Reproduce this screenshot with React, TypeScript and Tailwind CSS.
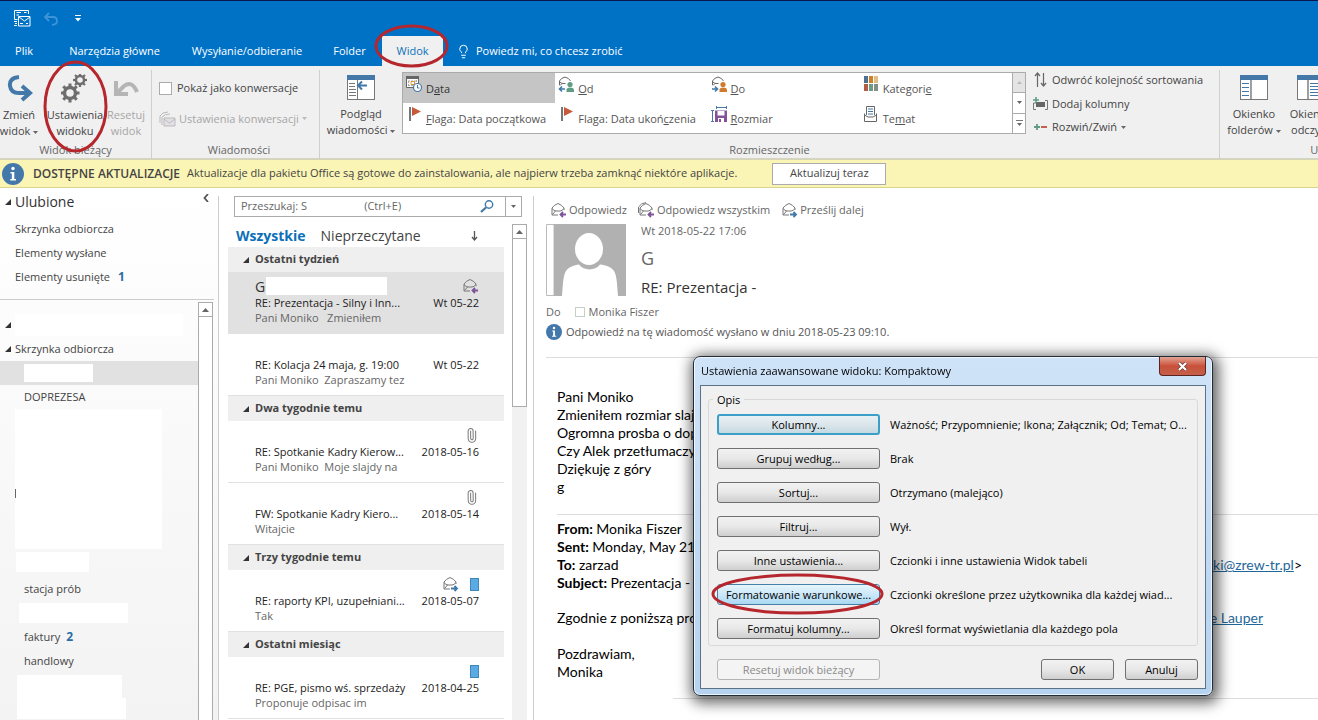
import React from "react";
import { Lightbulb, Paperclip } from "lucide-react";

type MailIcon = "reply" | "forward" | "clip";

type Mail = {
  sender?: string;
  subject: string;
  preview: string;
  date: string;
  icon?: MailIcon;
  category?: boolean;
  selected?: boolean;
};

const mailGroups: { title: string; mails: Mail[] }[] = [
  {
    title: "Ostatni tydzień",
    mails: [
      {
        sender: "G",
        subject: "RE: Prezentacja - Silny i Inn...",
        preview: "Pani Moniko   Zmieniłem",
        date: "Wt 05-22",
        icon: "reply",
        selected: true,
      },
      {
        subject: "RE: Kolacja 24 maja, g. 19:00",
        preview: "Pani Moniko  Zapraszamy tez",
        date: "Wt 05-22",
      },
    ],
  },
  {
    title: "Dwa tygodnie temu",
    mails: [
      {
        subject: "RE: Spotkanie Kadry Kierow...",
        preview: "Pani Moniko  Moje slajdy na",
        date: "2018-05-16",
        icon: "clip",
      },
      {
        subject: "FW: Spotkanie Kadry Kiero...",
        preview: "Witajcie",
        date: "2018-05-14",
        icon: "clip",
      },
    ],
  },
  {
    title: "Trzy tygodnie temu",
    mails: [
      {
        subject: "RE: raporty KPI, uzupełniani...",
        preview: "Tak",
        date: "2018-05-07",
        icon: "forward",
        category: true,
      },
    ],
  },
  {
    title: "Ostatni miesiąc",
    mails: [
      {
        subject: "RE: PGE, pismo wś. sprzedaży",
        preview: "Proponuje odpisac im",
        date: "2018-04-25",
        category: true,
      },
    ],
  },
];

const viewOptions = [
  { label: "Kolumny...", text: "Ważność; Przypomnienie; Ikona; Załącznik; Od; Temat; O..." },
  { label: "Grupuj według...", text: "Brak" },
  { label: "Sortuj...", text: "Otrzymano (malejąco)" },
  { label: "Filtruj...", text: "Wył." },
  { label: "Inne ustawienia...", text: "Czcionki i inne ustawienia Widok tabeli" },
  {
    label: "Formatowanie warunkowe...",
    text: "Czcionki określone przez użytkownika dla każdej wiad...",
  },
  { label: "Formatuj kolumny...", text: "Określ format wyświetlania dla każdego pola" },
];

const dialogButton =
  "h-[21px] rounded-[3px] border border-[#707070] bg-linear-to-b from-[#f2f2f2] from-0% via-[#e8e8e8] via-50% to-[#cfcfcf] text-center leading-[19px] whitespace-nowrap";
const dialogButtonFocus =
  "h-[21px] rounded-[3px] border-2 border-[#3c9fc8] bg-linear-to-b from-[#e8f1f5] via-[#dce6ea] to-[#c5d9e2] text-center leading-[17px] whitespace-nowrap";
const dialogButtonHover =
  "h-[21px] rounded-[3px] border border-[#4a7fa5] bg-linear-to-b from-[#e6f5fd] via-[#cbe8f9] to-[#a9d9f2] text-center leading-[19px] whitespace-nowrap";
const bigButton = "flex shrink-0 flex-col items-center whitespace-nowrap text-center leading-4";
const groupLabel = "mt-auto pb-px text-center text-[#666] leading-[14px]";

const Caret = ({ className = "text-[#666]" }: { className?: string }) => (
  <svg className={`inline-block shrink-0 ${className}`} width="5" height="3" viewBox="0 0 5 3">
    <path d="M0 0H5L2.5 3Z" fill="currentColor" />
  </svg>
);

const Corner = () => (
  <svg className="shrink-0" width="6" height="6" viewBox="0 0 6 6">
    <path d="M6 0V6H0Z" fill="#333" />
  </svg>
);

const Ring = ({ className }: { className: string }) => (
  <svg
    className={`pointer-events-none absolute z-10 overflow-visible ${className}`}
    viewBox="0 0 100 100"
    preserveAspectRatio="none"
  >
    <ellipse
      cx="50"
      cy="50"
      rx="50"
      ry="50"
      fill="none"
      stroke="#b5262d"
      strokeWidth="3"
      vectorEffect="non-scaling-stroke"
    />
  </svg>
);

const Envelope = ({ kind, all = false }: { kind: "reply" | "forward"; all?: boolean }) => (
  <svg className="shrink-0" width="17" height="16" viewBox="0 0 17 16" fill="none">
    {all && <path d="M.5 11V5Q3 1 8 .6" stroke="#777" />}
    <path d="M2 6Q4 3 8 1.500Q12 3 14 6V8M2 6V13H8" stroke="#777" strokeLinejoin="round" />
    <path d="M2 6.500Q4 9 6 9H10Q12 9 14 6.500M2.500 12.500L5.500 9" stroke="#777" />
    {kind === "reply" ? (
      <path d="M16 12.500H10.500M13 10L10.500 12.500L13 15" stroke="#7d5596" strokeWidth="1.8" />
    ) : (
      <path d="M9 12.500H15M12.500 10L15 12.500L12.500 15" stroke="#3f79a8" strokeWidth="1.8" />
    )}
  </svg>
);

const Info = ({ size }: { size: number }) => (
  <svg className="shrink-0" width={size} height={size} viewBox="0 0 22 22">
    <circle cx="11" cy="11" r="11" fill="#4478ab" />
    <circle cx="11" cy="5.5" r="1.7" fill="#fff" />
    <path d="M8.5 9H12.3V16H14V17.5H8.3V16H9.8V10.4H8.5Z" fill="#fff" />
  </svg>
);

const gearTeeth = [0, 45, 90, 135, 180, 225, 270, 315];

const Gear = ({ x, y, r }: { x: number; y: number; r: number }) => (
  <g transform={`translate(${x} ${y})`}>
    <circle r={r * 0.58} fill="none" stroke="#6e6e6e" strokeWidth={r * 0.36} />
    {gearTeeth.map((angle) => (
      <rect
        key={angle}
        x={-r * 0.16}
        y={-r}
        width={r * 0.32}
        height={r * 0.34}
        fill="#6e6e6e"
        transform={`rotate(${angle})`}
      />
    ))}
  </g>
);

const PaneIcon = ({ kind }: { kind: "preview" | "folders" | "reading" }) => (
  <svg width="28" height="26" viewBox="0 0 28 26" fill="none">
    <rect x=".5" y=".5" width="27" height="24" fill="#fff" stroke="#777" />
    <rect width="28" height="5" fill="#4378a9" />
    {kind === "preview" && (
      <>
        <path d="M2 8.5H8M2 11.5H8M2 14.5H9M2 17.5H9M2 20.5H9" stroke="#777" />
        <path d="M10.5 5V25" stroke="#777" />
        <path d="M20 10.5H11M15 6.5L11 10.5L15 14.5" stroke="#4378a9" strokeWidth="2" />
      </>
    )}
    {kind === "folders" && (
      <>
        <path d="M2 8.5H9M2 12.5H9M2 16.5H9M2 20.5H9" stroke="#4378a9" />
        <path d="M11 5V25" stroke="#777" strokeWidth="1.4" />
      </>
    )}
    {kind === "reading" && (
      <>
        <path d="M11 5V25" stroke="#777" strokeWidth="1.4" />
        <path d="M13 8.5H26M13 11.5H26M13 14.5H26M13 17.5H26M13 20.5H26" stroke="#4378a9" />
      </>
    )}
  </svg>
);

const DateIcon = () => (
  <svg className="shrink-0" width="17" height="17" viewBox="0 0 17 17" fill="none">
    <path d="M.5 .5H12.5V11.5H.5Z" fill="#fff" stroke="#666" />
    <path d="M0 0H13V3H0Z" fill="#666" />
    <path d="M2 5H11M2 9.500H8M2.500 5V10M10.500 4V7" stroke="#aaa" strokeDasharray="2 1" />
    <path d="M5 5.500H8.500V8.500H5Z" stroke="#d9953b" />
    <circle cx="11.5" cy="11.5" r="4" fill="#fff" stroke="#4378a9" strokeWidth="1.2" />
    <path d="M11.5 9V12H13.5" stroke="#4378a9" />
  </svg>
);

const PersonIcon = ({ to }: { to?: boolean }) => (
  <svg className="shrink-0" width="17" height="17" viewBox="0 0 17 17" fill="none">
    <path d="M1.500 9V5Q3 2 7 1Q11 2 12.500 5M1.500 5.500Q3 7.500 5 7.500H7.500M2 9.500L4 7.500" stroke="#666" />
    <circle cx="12" cy="8.500" r="2.600" fill={to ? "#d07a2d" : "#5f9c86"} />
    <path
      d="M8.500 16V13.500Q9 11.500 12 11.500Q15.500 11.500 16 13.500V16Z"
      fill={to ? "#d07a2d" : "#5f9c86"}
    />
    {to ? (
      <path d="M1 13H6M4 10.500L6.500 13L4 15.500" stroke="#3f79a8" strokeWidth="1.6" />
    ) : (
      <path d="M7 13H2M4 10.500L1.500 13L4 15.500" stroke="#3f79a8" strokeWidth="1.6" />
    )}
  </svg>
);

const FlagIcon = () => (
  <svg className="shrink-0" width="17" height="17" viewBox="0 0 17 17">
    <path d="M3 1H5V15H3Z" fill="#777" />
    <path d="M6 1L15 5.5L6 10Z" fill="#c65a3a" />
  </svg>
);

const SizeIcon = () => (
  <svg className="shrink-0" width="17" height="17" viewBox="0 0 17 17" fill="none">
    <path d="M5 1.500H16M5.500 0V3M15.500 0V3M1.500 4V16M0 4.500H3M0 15.500H3" stroke="#4378a9" />
    <path d="M4 4.500H16V16H4Z" fill="#83529b" />
    <path d="M6.500 5H13.500V9.500H6.500ZM7 12H13V16H7Z" fill="#fff" />
    <path d="M8 13H10V16H8Z" fill="#83529b" />
  </svg>
);

const CategoryIcon = () => (
  <svg className="shrink-0" width="17" height="17" viewBox="0 0 17 17">
    <path d="M1 0H5V7H1Z" fill="#4d7291" />
    <path d="M6 0H10V7H6Z" fill="#d37f2a" />
    <path d="M11 0H15V7H11Z" fill="#dfbf83" />
    <path d="M1 8H5V15H1Z" fill="#b55c45" />
    <path d="M6 8H10V15H6Z" fill="#6b9c8a" />
    <path d="M11 8H15V15H11Z" fill="#858f88" />
  </svg>
);

const SubjectIcon = () => (
  <svg className="shrink-0" width="17" height="17" viewBox="0 0 17 17" fill="none">
    <path d="M3.500 9V.5H11.500V9" fill="#fff" stroke="#666" />
    <path d="M5 3H10M5 5.500H10M5 8H10" stroke="#4378a9" />
    <path d="M1.500 7.500V15.500H13.500V7.500M1.500 9L5 11H10L13.500 9" stroke="#666" />
  </svg>
);

const galleryRows = [
  [
    { icon: <DateIcon />, before: "D", key: "a", after: "ta", active: true },
    { icon: <PersonIcon />, before: "", key: "O", after: "d" },
    { icon: <PersonIcon to />, before: "", key: "D", after: "o" },
    { icon: <CategoryIcon />, before: "Kategori", key: "e", after: "" },
  ],
  [
    { icon: <FlagIcon />, before: "", key: "F", after: "laga: Data początkowa" },
    { icon: <FlagIcon />, before: "Flaga: Data ukoń", key: "c", after: "zenia" },
    { icon: <SizeIcon />, before: "", key: "R", after: "ozmiar" },
    { icon: <SubjectIcon />, before: "Te", key: "m", after: "at" },
  ],
];

const TitleBar = () => (
  <header className="border-t border-[#0a1650] bg-[#0072c6] text-white">
    <div className="flex h-[35px] items-center gap-[13px] pl-[14px]">
      <button aria-label="Wyślij/odbierz">
        <svg width="17" height="17" viewBox="0 0 17 17" fill="none" stroke="#fff">
          <path d="M3.500 9.500H.5V.5H14.500V4M2.500 2.500H7M2.500 5H5M10 2.500H12.500M0 11.500H3M1 13.500H3M0 15.500H3" />
          <path d="M4.500 6.500H16V16H4.500ZM5 7L10.500 11L16 7M6 13.500H9M12 13.500H14" />
        </svg>
      </button>
      <button aria-label="Cofnij" className="text-[#3d93d6]">
        <svg width="14" height="14" viewBox="0 0 14 14" fill="none" stroke="currentColor" strokeWidth="1.8">
          <path d="M5 1L1 5L5 9M1 5H9Q13 5 13 9Q13 12.500 8 13" />
        </svg>
      </button>
      <button aria-label="Dostosuj pasek" className="ml-1">
        <svg width="6" height="7" viewBox="0 0 6 7" fill="#fff">
          <path d="M0 0H6V1H0ZM0 3H6L3 6.500Z" />
        </svg>
      </button>
    </div>
    <nav className="flex h-[30px] items-stretch text-[11px] whitespace-nowrap">
      <button className="w-12 text-center">Plik</button>
      <button className="w-[133px] text-center">Narzędzia główne</button>
      <button className="w-[132px] text-center">Wysyłanie/odbieranie</button>
      <button className="w-[69px] pl-1 text-center">Folder</button>
      <div className="relative flex w-[61px] bg-[#f0f0f0]">
        <button className="w-full text-center text-[#0b70b8]">Widok</button>
        <Ring className="-top-[10px] -left-[6px] h-[40px] w-[71px]" />
      </div>
      <button className="flex items-center gap-[5px] pl-[13px]">
        <Lightbulb size={15} strokeWidth={1.6} />
        Powiedz mi, co chcesz zrobić
      </button>
    </nav>
  </header>
);

const Ribbon = () => (
  <section className="flex h-[94px] shrink-0 border-b-2 border-[#d5d5bd] bg-[#f0f0f0] pt-1 text-[11px] text-[#444]">
    <div className="flex w-[152px] shrink-0 flex-col border-r border-[#cfcfcf]">
      <div className="flex pt-1">
        <button className={`${bigButton} w-[38px]`}>
          <svg className="mb-[3px]" width="28" height="30" viewBox="0 0 28 30" fill="none">
            <path d="M14 3Q4 4 5 12Q6 19 14 19H25M17 12L25 19L17 26" stroke="#4378a9" strokeWidth="4" />
          </svg>
          <span>Zmień</span>
          <span>
            widok <Caret />
          </span>
        </button>
        <div className="relative">
          <button className={`${bigButton} w-[74px]`}>
            <svg className="mb-[3px]" width="28" height="30" viewBox="0 0 28 30">
              <Gear x={9} y={19} r={9.5} />
              <Gear x={19} y={6} r={7} />
            </svg>
            <span>Ustawienia</span>
            <span>widoku</span>
          </button>
          <Ring className="-top-[12px] left-[7px] h-[89px] w-[61px]" />
        </div>
        <button disabled className={`${bigButton} w-[28px] text-[#a6a6a6]`}>
          <svg className="mb-[3px]" width="28" height="30" viewBox="0 0 28 30" fill="none">
            <path d="M4 7V20H16M5 19L12 12Q20 6 25 18" stroke="#b5b5b5" strokeWidth="4" />
          </svg>
          <span>Resetuj</span>
          <span>widok</span>
        </button>
      </div>
      <div className={groupLabel}>Widok bieżący</div>
    </div>

    <div className="flex w-[168px] shrink-0 flex-col border-r border-[#cfcfcf] pl-[7px]">
      <label className="mt-[10px] flex items-center gap-[5px] whitespace-nowrap">
        <input
          type="checkbox"
          className="size-[13px] shrink-0 appearance-none border border-[#ababab] bg-white"
        />
        Pokaż jako konwersacje
      </label>
      <button disabled className="mt-[14px] flex items-center gap-[3px] whitespace-nowrap text-[#a6a6a6]">
        <svg width="17" height="16" viewBox="0 0 17 16" fill="none" stroke="#bbb">
          <path d="M1 12V5Q3 1 9 1M3 14V6Q6 3 11 3" />
          <path d="M5 7H16V15H5Z" fill="#e4dfe6" />
          <path d="M5 8L10.5 12L16 8" />
        </svg>
        Ustawienia konwersacji
        <Caret className="text-[#bbb]" />
      </button>
      <div className={groupLabel}>Wiadomości</div>
    </div>

    <div className="flex w-[900px] shrink-0 flex-col border-r border-[#cfcfcf]">
      <div className="flex pt-[2px]">
        <button className={`${bigButton} w-[82px] pt-[3px]`}>
          <span className="mb-[5px]">
            <PaneIcon kind="preview" />
          </span>
          <span>Podgląd</span>
          <span>
            wiadomości <Caret />
          </span>
        </button>
        <div className="flex h-[62px] flex-1 border border-[#ababab] bg-white text-[#555]">
          <div className="flex flex-1 flex-col">
            {galleryRows.map((row, i) => (
              <div key={i} className="grid flex-1 grid-cols-4">
                {row.map((item) => (
                  <button
                    key={item.before + item.key + item.after}
                    className={
                      item.active
                        ? "flex items-start gap-[3px] bg-[#c5c5c5] pt-[3px] pl-[3px] whitespace-nowrap text-[#333]"
                        : "flex items-start gap-[3px] pt-[3px] pl-[3px] whitespace-nowrap"
                    }
                  >
                    {item.icon}
                    <span className="pt-[5px]">
                      {item.before}
                      <u>{item.key}</u>
                      {item.after}
                    </span>
                  </button>
                ))}
              </div>
            ))}
          </div>
          <div className="flex w-[13px] flex-col divide-y divide-[#ababab] border-l border-[#ababab]">
            <button aria-label="W górę" className="flex flex-1 items-center justify-center bg-[#e4e4e4]">
              <Caret className="rotate-180 text-[#bbb]" />
            </button>
            <button aria-label="W dół" className="flex flex-1 items-center justify-center">
              <Caret />
            </button>
            <button aria-label="Więcej" className="flex flex-1 flex-col items-center justify-center gap-[2px]">
              <span className="h-px w-[7px] bg-[#777]" />
              <Caret />
            </button>
          </div>
        </div>
        <div className="flex w-[193px] flex-col items-start gap-[7px] pl-[7px] whitespace-nowrap">
          <button className="flex items-center gap-1">
            <svg width="15" height="16" viewBox="0 0 15 16" fill="none" stroke="#666" strokeWidth="1.2">
              <path d="M4.500 15V1M2 4L4.500 1L7 4M10.500 1V14M8 11L10.500 14L13 11" />
            </svg>
            Odwróć kolejność sortowania
          </button>
          <button className="flex items-center gap-1">
            <svg width="15" height="14" viewBox="0 0 15 14" fill="none">
              <path d="M3 6H.5V12.500H3M12 3.500H14.500V12.500H12" stroke="#777" />
              <path d="M3 5H12V10H3Z" fill="#666" />
              <path d="M3 0V6M0 3H6" stroke="#5f9c86" strokeWidth="1.6" />
            </svg>
            Dodaj kolumny
          </button>
          <button className="flex items-center gap-1">
            <svg width="15" height="8" viewBox="0 0 15 8">
              <path d="M4 1V7M1 4H7" stroke="#5f9c86" strokeWidth="1.8" />
              <path d="M8 4H14" stroke="#c0503a" strokeWidth="1.8" />
            </svg>
            Rozwiń/Zwiń
            <Caret />
          </button>
        </div>
      </div>
      <div className={groupLabel}>Rozmieszczenie</div>
    </div>

    <div className="flex w-[210px] shrink-0 flex-col">
      <div className="flex pt-[5px]">
        <button className={`${bigButton} w-[68px]`}>
          <span className="mb-[5px]">
            <PaneIcon kind="folders" />
          </span>
          <span>Okienko</span>
          <span>
            folderów <Caret />
          </span>
        </button>
        <button className={`${bigButton} w-[46px]`}>
          <span className="mb-[5px]">
            <PaneIcon kind="reading" />
          </span>
          <span>Okienko</span>
          <span>odczytu</span>
        </button>
      </div>
      <div className={groupLabel}>Układ</div>
    </div>
  </section>
);

const UpdateBar = () => (
  <section className="flex h-[28px] shrink-0 items-center border-b border-[#d9d58c] bg-[#fbf5b5] pl-[2px] text-[11px] whitespace-nowrap text-[#444]">
    <Info size={22} />
    <strong className="ml-[9px] text-[12px] font-semibold">DOSTĘPNE AKTUALIZACJE</strong>
    <span className="ml-[7px]">
      Aktualizacje dla pakietu Office są gotowe do zainstalowania, ale najpierw trzeba zamknąć niektóre
      aplikacje.
    </span>
    <button className="ml-[35px] h-[22px] w-[114px] border border-[#ababab] bg-white text-center">
      Aktualizuj teraz
    </button>
  </section>
);

const ScrollUp = () => (
  <button
    aria-label="Przewiń w górę"
    className="flex h-[15px] w-full shrink-0 items-center justify-center border border-[#ababab] bg-white"
  >
    <svg width="7" height="4" viewBox="0 0 7 4">
      <path d="M0 4H7L3.5 0Z" fill="#666" />
    </svg>
  </button>
);

const folderRow = "flex h-6 items-center whitespace-nowrap";

const Folders = () => (
  <aside className="flex w-[218px] shrink-0 flex-col bg-linear-to-b from-white to-[#f3f3f3] text-[11px] text-[#444]">
    <div className="mr-1 h-[112px] border-b border-[#ccc] pt-px">
      <div className="flex items-center gap-1 pr-[5px] pl-[5px]">
        <Corner />
        <h2 className="text-[14px] leading-[26px] text-[#333]">Ulubione</h2>
        <button aria-label="Zwiń okienko" className="mb-2 ml-auto">
          <svg width="6" height="8" viewBox="0 0 6 8" fill="none" stroke="#555" strokeWidth="1.8">
            <path d="M5 0L1.5 4L5 8" />
          </svg>
        </button>
      </div>
      <ul className="pt-[2px] pl-[15px]">
        <li className={folderRow}>Skrzynka odbiorcza</li>
        <li className={folderRow}>Elementy wysłane</li>
        <li className={folderRow}>
          Elementy usunięte <b className="ml-2 text-[12px] text-[#2a6ca5]">1</b>
        </li>
      </ul>
    </div>
    <div className="flex min-h-0 flex-1 pt-[2px]">
      <ul className="flex-1 overflow-hidden pt-[11px]">
        <li className={`${folderRow} pl-[5px]`}>
          <Corner />
          <span className="ml-1 h-[22px] w-[168px] bg-white" />
        </li>
        <li className={`${folderRow} gap-1 pl-[5px]`}>
          <Corner />
          Skrzynka odbiorcza
        </li>
        <li className={`${folderRow} bg-[#e1e1e1] pl-6`}>
          <span className="h-[18px] w-[69px] bg-white" />
        </li>
        <li className={`${folderRow} pl-6`}>DOPREZESA</li>
        <li className="flex h-[168px] flex-col gap-[3px] pl-[15px]">
          <span className="flex h-[140px] w-[147px] items-center bg-white">
            <span className="mt-7 h-[9px] w-px bg-[#666]" />
          </span>
          <span className="ml-px h-5 w-[73px] bg-white" />
        </li>
        <li className={`${folderRow} pl-6`}>stacja prób</li>
        <li className={`${folderRow} pl-[19px]`}>
          <span className="h-5 w-[109px] bg-white" />
        </li>
        <li className={`${folderRow} pl-6`}>
          faktury <b className="ml-[6px] text-[12px] text-[#2a6ca5]">2</b>
        </li>
        <li className={`${folderRow} pl-6`}>handlowy</li>
        <li className="pt-[2px] pl-[17px]">
          <span className="block h-[23px] w-[105px] bg-white" />
          <span className="block h-[21px] w-[109px] bg-white" />
        </li>
      </ul>
      <div className="mr-[5px] flex w-[15px] flex-col">
        <ScrollUp />
        <div className="flex-1 border-x border-[#ababab] bg-white" />
      </div>
    </div>
  </aside>
);

const MailRow = ({ mail }: { mail: Mail }) => (
  <li
    className={
      mail.selected
        ? "h-[62px] bg-[#e1e1e1] pt-[5px] pr-[25px] pl-[27px]"
        : "h-[62px] border-b border-[#e1e1e1] pt-[5px] pr-[25px] pl-[27px]"
    }
  >
    <div className="flex h-[18px] items-center gap-[11px]">
      {mail.sender && (
        <>
          <span className="text-[14px] text-[#333]">{mail.sender}</span>
          <span className="-ml-[10px] h-[18px] w-[121px] bg-white" />
        </>
      )}
      <span className="ml-auto" />
      {mail.icon === "clip" && <Paperclip size={15} strokeWidth={1.6} className="-rotate-45 text-[#777]" />}
      {(mail.icon === "reply" || mail.icon === "forward") && <Envelope kind={mail.icon} />}
      {mail.category && <span className="h-[13px] w-[9px] border border-[#3f87bb] bg-[#5aabe3]" />}
    </div>
    <div className="flex justify-between text-[11px] leading-4 whitespace-nowrap text-[#222]">
      <span>{mail.subject}</span>
      <span>{mail.date}</span>
    </div>
    <p className="text-[11px] leading-[14px] whitespace-pre text-[#666]">{mail.preview}</p>
  </li>
);

const MailList = () => (
  <section className="mt-2 flex w-[316px] shrink-0 flex-col border-x border-[#ccc] text-[#444]">
    <div className="mr-[11px] ml-[15px] flex h-[21px] shrink-0 border border-[#ababab] bg-white text-[11px]">
      <label htmlFor="search" className="sr-only">
        Przeszukaj
      </label>
      <input
        id="search"
        placeholder="Przeszukaj: S                    (Ctrl+E)"
        className="min-w-0 flex-1 px-[6px] whitespace-pre outline-none placeholder:text-[#666]"
      />
      <button aria-label="Szukaj" className="px-[11px]">
        <svg width="14" height="13" viewBox="0 0 14 13" fill="none" stroke="#3f79a8">
          <circle cx="9" cy="4.5" r="3.7" strokeWidth="1.4" />
          <path d="M6 7.500L1 12" strokeWidth="2.2" />
        </svg>
      </button>
      <button aria-label="Zakres" className="flex w-4 items-center justify-center border-l border-[#ababab]">
        <Caret />
      </button>
    </div>
    <div className="mt-[7px] flex min-h-0 flex-1 gap-2 pr-[6px] pl-[9px]">
      <div className="min-w-0 flex-1 overflow-hidden">
        <div className="flex h-[23px] items-center gap-[15px] pl-2 text-[14px]">
          <button className="font-bold text-[#0b70b8]">Wszystkie</button>
          <button>Nieprzeczytane</button>
          <button aria-label="Sortuj" className="mr-[26px] ml-auto">
            <svg width="7" height="10" viewBox="0 0 7 10" fill="none" stroke="#555" strokeWidth="1.3">
              <path d="M3.5 0V9M1 6L3.5 9L6 6" />
            </svg>
          </button>
        </div>
        {mailGroups.map((group) => (
          <div key={group.title}>
            <h3 className="flex h-[25px] items-center gap-[6px] bg-[#efefef] pl-[15px] text-[11px] font-bold">
              <Corner />
              {group.title}
            </h3>
            <ul>
              {group.mails.map((mail) => (
                <MailRow key={mail.subject} mail={mail} />
              ))}
            </ul>
          </div>
        ))}
      </div>
      <div className="w-[15px] shrink-0 bg-[#f1f1f1]">
        <ScrollUp />
        <div className="h-[168px] border border-t-0 border-[#ababab] bg-white" />
      </div>
    </div>
  </section>
);

const ReadingPane = () => (
  <main className="flex min-w-0 flex-1 flex-col overflow-hidden pt-3 pl-3 text-[11px] text-[#666]">
    <div className="flex items-center gap-[11px] pl-1 leading-5 whitespace-nowrap">
      <button className="flex items-center gap-[2px]">
        <Envelope kind="reply" />
        Odpowiedz
      </button>
      <button className="flex items-center gap-[2px]">
        <Envelope kind="reply" all />
        Odpowiedz wszystkim
      </button>
      <button className="flex items-center gap-[2px]">
        <Envelope kind="forward" />
        Prześlij dalej
      </button>
    </div>
    <div className="mt-1 flex gap-[15px]">
      <svg width="80" height="72" viewBox="0 0 80 72">
        <path d="M.5 .5H8V71.500H.5Z" fill="#fff" stroke="#bbb" />
        <path d="M8 0H80V72H8Z" fill="#b1b1b1" />
        <ellipse cx="43" cy="25" rx="14" ry="16" fill="#fff" />
        <path
          d="M16 72C17 60 17 52 20 47C23 43 28 41 33 40.500C38 47 49 47 54 40.500C60 41 65 43 68 47C71 52 71 60 72 72Z"
          fill="#fff"
        />
      </svg>
      <div className="leading-[14px]">
        <p>Wt 2018-05-22 17:06</p>
        <p className="mt-2 text-[18px] leading-6">G</p>
        <h1 className="mt-[7px] text-[15px] leading-5 text-[#333]">RE: Prezentacja -</h1>
      </div>
    </div>
    <div className="mt-[6px] flex items-center leading-[18px]">
      Do
      <label className="ml-[14px] flex items-center gap-1">
        <input type="checkbox" className="size-[10px] appearance-none border border-[#c5d0cc] bg-white" />
        Monika Fiszer
      </label>
    </div>
    <div className="mt-[2px] flex items-center gap-1 leading-[18px] text-[#555]">
      <Info size={16} />
      Odpowiedź na tę wiadomość wysłano w dniu 2018-05-23 09:10.
    </div>
    <hr className="mt-4 shrink-0 border-[#ddd]" />
    <article className="pt-[30px] pl-[11px] font-[Lato,'Liberation_Sans',sans-serif] text-[14px] leading-[18px] text-black">
      <p>Pani Moniko</p>
      <p>Zmieniłem rozmiar slajd</p>
      <p>Ogromna prosba o dop</p>
      <p>Czy Alek przetłumaczy s</p>
      <p>Dziękuję z góry</p>
      <p>g</p>
      <hr className="mt-[18px] mb-[5px] border-[#ddd]" />
      <p>
        <b>From:</b> Monika Fiszer
      </p>
      <p>
        <b>Sent:</b> Monday, May 21,
      </p>
      <p className="flex justify-between pr-4">
        <span>
          <b>To:</b> zarzad
        </span>
        <span>
          <a href="#mail" className="text-[#1f6799] underline">
            ki@zrew-tr.pl
          </a>
          &gt;
        </span>
      </p>
      <p>
        <b>Subject:</b> Prezentacja - S
      </p>
      <p className="mt-[17px] flex justify-between pr-[55px]">
        <span>Zgodnie z poniższą pros</span>
        <a href="#lauper" className="text-[#1f6799] underline">
          e Lauper
        </a>
      </p>
      <p className="mt-[18px]">Pozdrawiam,</p>
      <p>Monika</p>
      <hr className="mt-[17px] ml-[116px] border-[#ddd]" />
    </article>
  </main>
);

const SettingsDialog = () => (
  <div
    role="dialog"
    aria-labelledby="dialog-title"
    className="fixed top-[356px] left-[693px] flex w-[520px] flex-col rounded-[7px] border border-[#222c38] bg-linear-to-b from-[#cfe3f8] to-[#b5d3f0] px-[6px] pb-[6px] text-[11px] text-black shadow-[2px_3px_14px_4px_rgba(0,0,0,0.6)] inset-ring inset-ring-white/70"
  >
    <div className="flex h-7 items-start justify-between">
      <h2 id="dialog-title" className="pl-px leading-[27px]">
        Ustawienia zaawansowane widoku: Kompaktowy
      </h2>
      <button
        aria-label="Zamknij"
        className="flex h-[19px] w-[47px] items-center justify-center rounded-b-[4px] border border-t-0 border-[#5c2320] bg-linear-to-b from-[#e2a394] via-[#c9503a] to-[#c4604a]"
      >
        <svg width="11" height="9" viewBox="0 0 11 9" fill="none">
          <path d="M2 1L9 8M9 1L2 8" stroke="#6b3a38" strokeWidth="3.6" />
          <path d="M2 1L9 8M9 1L2 8" stroke="#fff" strokeWidth="2.2" />
        </svg>
      </button>
    </div>
    <div className="border border-[#5d7286] bg-[#f0f0f0] px-[7px] pt-[5px] pb-2">
      <fieldset className="rounded-[3px] border border-[#d8d8d8] px-2 pb-[6px]">
        <legend className="-ml-1 px-1 leading-[17px]">Opis</legend>
        <div className="flex flex-col gap-[13px] pt-[6px]">
          {viewOptions.map((option, i) => (
            <div key={option.label} className="relative flex items-center gap-[10px] whitespace-nowrap">
              <button
                className={`w-[163px] shrink-0 ${
                  i === 0 ? dialogButtonFocus : i === 5 ? dialogButtonHover : dialogButton
                }`}
              >
                {option.label}
              </button>
              <span className="leading-[21px]">{option.text}</span>
              {i === 5 && <Ring className="top-[-9px] left-[-4px] h-[38px] w-[169px]" />}
            </div>
          ))}
        </div>
      </fieldset>
      <div className="mt-[13px] flex gap-[11px] pl-[9px]">
        <button
          disabled
          className="mr-auto h-[21px] w-[163px] rounded-[3px] border border-[#b5b5b5] bg-[#f4f4f4] text-center leading-[19px] text-[#8a8a8a]"
        >
          Resetuj widok bieżący
        </button>
        <button className={`${dialogButton} w-[73px]`}>OK</button>
        <button className={`${dialogButton} w-[73px]`}>Anuluj</button>
      </div>
    </div>
  </div>
);

export default function App() {
  return (
    <div className="flex h-screen flex-col overflow-hidden bg-white font-['Open_Sans','Liberation_Sans',sans-serif]">
      <TitleBar />
      <Ribbon />
      <UpdateBar />
      <div className="flex min-h-0 flex-1">
        <Folders />
        <MailList />
        <ReadingPane />
      </div>
      <SettingsDialog />
    </div>
  );
}
